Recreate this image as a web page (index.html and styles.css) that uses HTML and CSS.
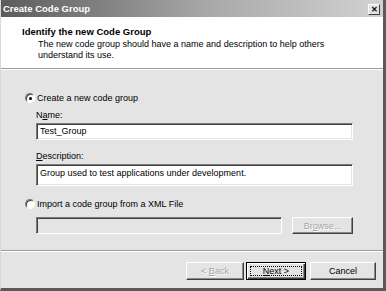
FILE: index.html
```html
<!DOCTYPE html>
<html lang="en">
<head>
  <meta charset="UTF-8" />
  <title>Create Code Group</title>
  <link rel="stylesheet" href="styles.css">
</head>
<body>
  <div class="window">
    <div class="titlebar">
      <span class="title">Create Code Group</span>
      <span class="close">&#x2715;</span>
    </div>

    <div class="header">
      <h1>Identify the new Code Group</h1>
      <p>The new code group should have a name and description to help others<br>understand its use.</p>
    </div>

    <div class="content">
      <label class="option">
        <span class="radio checked"></span>
        Create a new code group
      </label>
      <div class="fields">
        <div class="label">N<u>a</u>me:</div>
        <div class="input">Test_Group</div>
        <div class="label"><u>D</u>escription:</div>
        <div class="input tall">Group used to test applications under development.</div>
      </div>

      <label class="option second">
        <span class="radio"></span>
        Import a code group from a XML File
      </label>
      <div class="file-row">
        <div class="input disabled"></div>
        <button class="btn browse" disabled>Br<u>o</u>wse...</button>
      </div>
    </div>

    <div class="footer">
      <button class="btn back" disabled>&lt; <u>B</u>ack</button>
      <button class="btn default"><span class="focus"><u>N</u>ext &gt;</span></button>
      <button class="btn cancel">Cancel</button>
    </div>
  </div>
</body>
</html>
```

FILE: styles.css
```css
body {
  margin: 0;
  font-family: "Liberation Sans", Arial, sans-serif;
  font-size: 9px;
  color: #000;
  background: #fff;
}
.window {
  width: 386px;
  height: 291px;
  box-sizing: border-box;
  background: #e4e4e4;
  border-left: 1px solid #d8d8d8;
  border-right: 3px solid #5a5a5a;
  border-bottom: 3px solid #5a5a5a;
  display: flex;
  flex-direction: column;
  overflow: hidden;
}
.titlebar {
  height: 17px;
  flex: none;
  display: flex;
  align-items: center;
  justify-content: space-between;
  padding: 0 3px 0 2px;
  background: linear-gradient(to right, #5c5c5c, #a9a9a9 55%, #d2d2d2);
}
.title {
  color: #fff;
  font-weight: bold;
  font-size: 9.5px;
}
.close {
  width: 12px;
  height: 11px;
  box-sizing: border-box;
  background: #e4e4e4;
  border: 1px solid;
  border-color: #fff #404040 #404040 #fff;
  font-size: 8px;
  font-weight: bold;
  line-height: 9px;
  text-align: center;
  margin-top: 1px;
}
.header {
  height: 52px;
  flex: none;
  background: #fff;
  border-bottom: 1px solid #9a9a9a;
  box-shadow: 0 1px 0 #fff;
  padding: 9px 0 0 21px;
  box-sizing: border-box;
}
.header h1 {
  margin: 0;
  font-size: 9.5px;
  font-weight: bold;
  line-height: 12px;
}
.header p {
  margin: 1px 0 0 16px;
  line-height: 11px;
}
.content {
  flex: 1;
  padding: 23px 0 0 23px;
  border-bottom: 1px solid #9a9a9a;
  box-shadow: 0 1px 0 #fff;
}
.option {
  display: flex;
  align-items: center;
  gap: 2px;
  height: 12px;
}
.option.second {
  margin-top: 12px;
}
.radio {
  width: 8px;
  height: 8px;
  margin-left: 1px;
  border-radius: 50%;
  background: #fff;
  border: 1px solid;
  border-color: #7a7a7a #fff #fff #7a7a7a;
  box-shadow: inset 1px 1px 0 #404040;
  display: flex;
  align-items: center;
  justify-content: center;
}
.radio.checked::after {
  content: "";
  width: 3px;
  height: 3px;
  border-radius: 50%;
  background: #000;
}
.fields {
  padding: 6px 0 0 12px;
  width: 317px;
}
.label {
  line-height: 11px;
  margin-bottom: 2px;
}
.input {
  height: 17px;
  box-sizing: border-box;
  background: #fff;
  border: 1px solid;
  border-color: #7a7a7a #fff #fff #7a7a7a;
  box-shadow: inset 1px 1px 0 #404040, inset -1px -1px 0 #e4e4e4;
  padding: 2px 0 0 3px;
  line-height: 11px;
  margin-bottom: 11px;
}
.input.tall {
  height: 22px;
  padding-top: 3px;
  margin-bottom: 0;
}
.file-row {
  display: flex;
  gap: 10px;
  padding: 7px 0 0 12px;
}
.input.disabled {
  width: 246px;
  height: 17px;
  background: #e4e4e4;
  margin: 0;
}
.btn {
  height: 18px;
  padding: 0;
  font: inherit;
  background: #e4e4e4;
  border: 1px solid;
  border-color: #fff #404040 #404040 #fff;
  box-shadow: inset -1px -1px 0 #8a8a8a;
  color: #000;
}
.btn:disabled {
  color: #a4a4a4;
  text-shadow: 1px 1px 0 #fff;
}
.btn.browse {
  width: 61px;
  height: 17px;
}
.footer {
  height: 37px;
  flex: none;
  display: flex;
  justify-content: flex-end;
  align-items: flex-start;
  padding: 11px 7px 0 0;
  box-sizing: border-box;
  gap: 2px;
}
.btn.back {
  width: 58px;
}
.btn.default {
  width: 60px;
  border: 1px solid #000;
  box-shadow: inset 1px 1px 0 #fff, inset -1px -1px 0 #404040, inset -2px -2px 0 #8a8a8a;
  padding: 3px;
}
.focus {
  display: flex;
  align-items: center;
  justify-content: center;
  height: 100%;
  border: 1px dotted #000;
  box-sizing: border-box;
}
.btn.cancel {
  margin-left: 2px;
  width: 66px;
}
```
